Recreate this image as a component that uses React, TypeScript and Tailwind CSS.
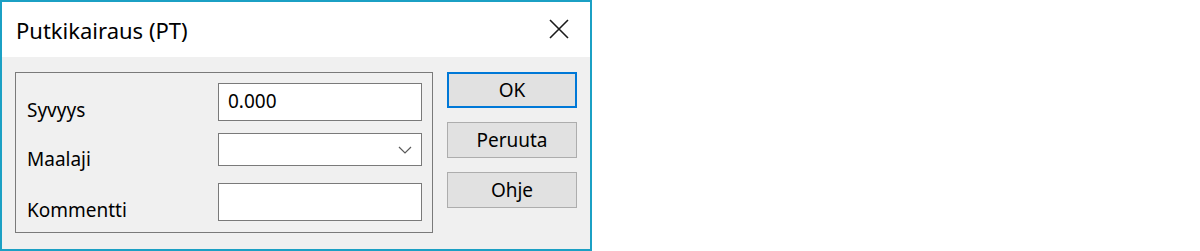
import React from "react";

const font = { fontFamily: '"Noto Sans", "Open Sans", sans-serif' };

function CloseIcon() {
  return (
    <svg width="20" height="20" viewBox="0 0 20 20" className="block">
      <path d="M1 1 L19 19 M19 1 L1 19" stroke="#1a1a1a" strokeWidth="1.6" fill="none" />
    </svg>
  );
}

function Chevron() {
  return (
    <svg width="14" height="8" viewBox="0 0 14 8" className="block">
      <path d="M1 1 L7 7 L13 1" stroke="#5a5a5a" strokeWidth="1.2" fill="none" />
    </svg>
  );
}

export default function App() {
  return (
    <div className="h-[251px] w-[1200px] bg-white" style={font}>
      <div className="flex h-[251px] w-[592px] flex-col border-2 border-[#1ba0c4] bg-[#f0f0f0]">
        {/* title bar */}
        <div className="flex h-[55px] shrink-0 items-start justify-between bg-white">
          <div className="pl-[14px] pt-[13px] text-[22px] leading-[30px] text-black">Putkikairaus (PT)</div>
          <div className="pr-[21px] pt-[17px]">
            <CloseIcon />
          </div>
        </div>

        {/* body */}
        <div className="flex pl-[13px] pt-[15px]">
          <div className="flex h-[161px] w-[418px] flex-col border border-[#7a7a7a] pl-[11px] pr-[10px] pt-[10px] text-[19px] text-black">
            <div className="flex h-[38px] items-start justify-between">
              <div className="pt-[14px] leading-[26px]">Syvyys</div>
              <div className="h-[38px] w-[204px] border border-[#7a7a7a] bg-white pl-[9px] pt-[4px] leading-[26px]">
                0.000
              </div>
            </div>
            <div className="mt-[12px] flex h-[33px] items-start justify-between">
              <div className="pt-[13px] leading-[26px]">Maalaji</div>
              <div className="flex h-[33px] w-[204px] items-center justify-end border border-[#7a7a7a] bg-white pr-[9px] pt-[1px]">
                <Chevron />
              </div>
            </div>
            <div className="mt-[17px] flex h-[38px] items-start justify-between">
              <div className="pt-[14px] leading-[26px]">Kommentti</div>
              <div className="h-[38px] w-[204px] border border-[#7a7a7a] bg-white" />
            </div>
          </div>

          <div className="ml-[14px] flex w-[130px] flex-col text-[19px] text-black">
            <button
              type="button"
              className="flex h-[36px] items-center justify-center border-2 border-[#0078d7] bg-[#e1e1e1] leading-[26px]"
            >
              OK
            </button>
            <button
              type="button"
              className="mt-[14px] flex h-[36px] items-center justify-center border border-[#adadad] bg-[#e1e1e1] leading-[26px]"
            >
              Peruuta
            </button>
            <button
              type="button"
              className="mt-[14px] flex h-[36px] items-center justify-center border border-[#adadad] bg-[#e1e1e1] leading-[26px]"
            >
              Ohje
            </button>
          </div>
        </div>
      </div>
    </div>
  );
}
